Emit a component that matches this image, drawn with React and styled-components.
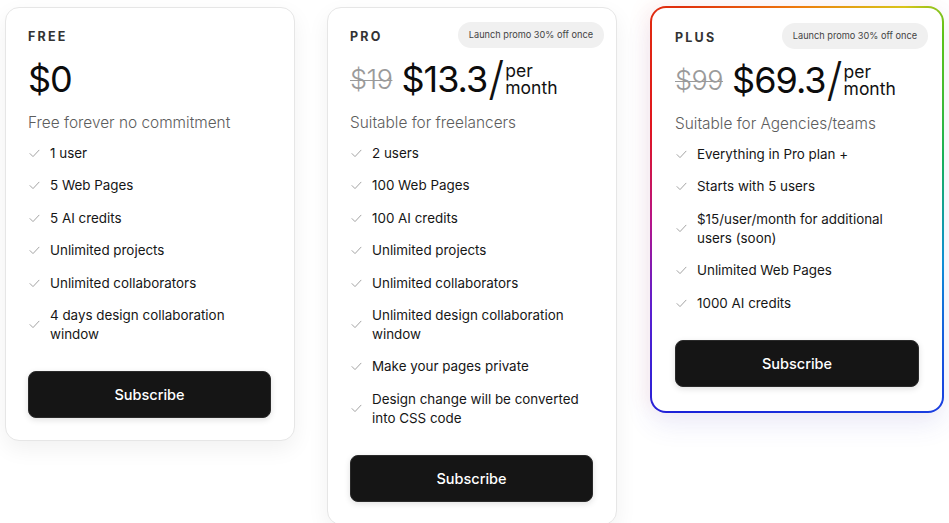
import React from "react";
import styled, { createGlobalStyle } from "styled-components";

const Global = createGlobalStyle`
  html, body { margin: 0; padding: 0; background: #ffffff; }
  body { font-family: "Inter", "Noto Sans", sans-serif; color: #111; -webkit-font-smoothing: antialiased; }
  * { box-sizing: border-box; }
`;

const Page = styled.div`
  display: flex;
  align-items: flex-start;
  gap: 32px;
  padding: 7px 5px 0 5px;
  height: 523px;
  overflow: hidden;
`;

const Card = styled.div`
  position: relative;
  width: 290px;
  flex: 0 0 auto;
  background: #fff;
  border: 1px solid #e6e6e6;
  border-radius: 14px;
  padding: 21px 23px 22px 22px;
  box-shadow: 0 8px 22px rgba(0, 0, 0, 0.06);
  display: flex;
  flex-direction: column;
`;

const GradientFrame = styled.div`
  position: relative;
  flex: 0 0 auto;
  width: 294px;
  margin-top: -1px;
  margin-left: 1px;
  padding: 2px;
  border-radius: 16px;
  background: conic-gradient(
    from 0deg at 50% 50%,
    #ee7a0c 0deg,
    #d9c41a 28deg,
    #5cc21c 40deg,
    #18b05a 70deg,
    #0f8fd6 110deg,
    #1a3fe0 144deg,
    #1a22d8 210deg,
    #5a1fd0 235deg,
    #b5148a 265deg,
    #e0151f 300deg,
    #e0300c 330deg,
    #ee7a0c 360deg
  );
  box-shadow: -6px -4px 18px rgba(255, 120, 90, 0.08), 0 12px 26px rgba(70, 70, 200, 0.1);
`;

const InnerCard = styled(Card)`
  width: 290px;
  border: none;
  border-radius: 14px;
  box-shadow: none;
  padding: 22px 23px 24px 23px;
`;

const Label = styled.div`
  font-size: 12.5px;
  line-height: 16px;
  font-weight: 700;
  letter-spacing: 2.2px;
  color: #333;
`;

const Badge = styled.div`
  position: absolute;
  top: ${(p) => p.$top}px;
  right: ${(p) => p.$right}px;
  height: 26px;
  padding: 0 11px;
  border-radius: 13px;
  background: #f0f0f0;
  color: #444;
  font-size: 9.2px;
  line-height: 26px;
  white-space: nowrap;
`;

const PriceRow = styled.div`
  display: flex;
  align-items: center;
  height: 44px;
  margin-top: 12px;
`;

const OldPrice = styled.span`
  font-size: 27px;
  font-weight: 300;
  color: #9a9a9a;
  text-decoration: line-through;
  text-decoration-thickness: 1px;
  letter-spacing: -0.5px;
  margin-right: 9px;
`;

const Price = styled.span`
  font-size: 36px;
  font-weight: 400;
  color: #0c0c0c;
  letter-spacing: -1px;
  line-height: 44px;
`;

const Slash = styled.span`
  font-size: 46px;
  font-weight: 300;
  line-height: 44px;
  color: #111;
  margin: 0 0 0 1px;
  transform: translateY(-1px);
`;

const Per = styled.div`
  display: flex;
  flex-direction: column;
  font-size: 17.5px;
  line-height: 17px;
  color: #111;
  font-weight: 400;
  margin-left: 1px;
`;

const Subtitle = styled.div`
  margin-top: 11px;
  font-size: 15.4px;
  line-height: 22px;
  font-weight: 300;
  color: #5d5d5d;
`;

const List = styled.ul`
  list-style: none;
  margin: 10px 0 0 0;
  padding: 0;
  display: flex;
  flex-direction: column;
  gap: 13.4px;
`;

const Item = styled.li`
  display: flex;
  align-items: center;
  gap: 10px;
  font-size: 13.4px;
  line-height: 19px;
  color: #161616;
  padding-right: 10px;
`;

const Check = styled.svg`
  flex: 0 0 auto;
  width: 11px;
  height: 9px;
  margin-left: 1px;
`;

const Button = styled.button`
  margin-top: 27px;
  height: 47px;
  width: 100%;
  border-radius: 8px;
  border: 1px solid #2a2a2a;
  background: #151515;
  color: #fff;
  font-family: inherit;
  font-size: 14.5px;
  font-weight: 500;
  box-shadow: 0 2px 6px rgba(0, 0, 0, 0.12);
  cursor: pointer;
`;

const CheckIcon = () => (
  <Check viewBox="0 0 11 9" fill="none">
    <path d="M1 4.6 L4 7.6 L10 1.2" stroke="#a3a3a3" strokeWidth="1" strokeLinecap="round" strokeLinejoin="round" />
  </Check>
);

const Features = ({ items }) => (
  <List>
    {items.map((t) => (
      <Item key={t}>
        <CheckIcon />
        <span>{t}</span>
      </Item>
    ))}
  </List>
);

const PriceLine = ({ old, price, monthly }) => (
  <PriceRow>
    {old && <OldPrice>{old}</OldPrice>}
    <Price>{price}</Price>
    {monthly && (
      <>
        <Slash>/</Slash>
        <Per>
          <span>per</span>
          <span>month</span>
        </Per>
      </>
    )}
  </PriceRow>
);

export default function App() {
  return (
    <>
      <Global />
      <Page>
        <Card>
          <Label>FREE</Label>
          <PriceLine price="$0" />
          <Subtitle>Free forever no commitment</Subtitle>
          <Features
            items={[
              "1 user",
              "5 Web Pages",
              "5 AI credits",
              "Unlimited projects",
              "Unlimited collaborators",
              "4 days design collaboration window",
            ]}
          />
          <Button>Subscribe</Button>
        </Card>

        <Card>
          <Badge $top={14} $right={12}>Launch promo 30% off once</Badge>
          <Label>PRO</Label>
          <PriceLine old="$19" price="$13.3" monthly />
          <Subtitle>Suitable for freelancers</Subtitle>
          <Features
            items={[
              "2 users",
              "100 Web Pages",
              "100 AI credits",
              "Unlimited projects",
              "Unlimited collaborators",
              "Unlimited design collaboration window",
              "Make your pages private",
              "Design change will be converted into CSS code",
            ]}
          />
          <Button>Subscribe</Button>
        </Card>

        <GradientFrame>
          <InnerCard>
            <Badge $top={15} $right={14}>Launch promo 30% off once</Badge>
            <Label>PLUS</Label>
            <PriceLine old="$99" price="$69.3" monthly />
            <Subtitle>Suitable for Agencies/teams</Subtitle>
            <Features
              items={[
                "Everything in Pro plan +",
                "Starts with 5 users",
                "$15/user/month for additional users (soon)",
                "Unlimited Web Pages",
                "1000 AI credits",
              ]}
            />
            <Button>Subscribe</Button>
          </InnerCard>
        </GradientFrame>
      </Page>
    </>
  );
}
